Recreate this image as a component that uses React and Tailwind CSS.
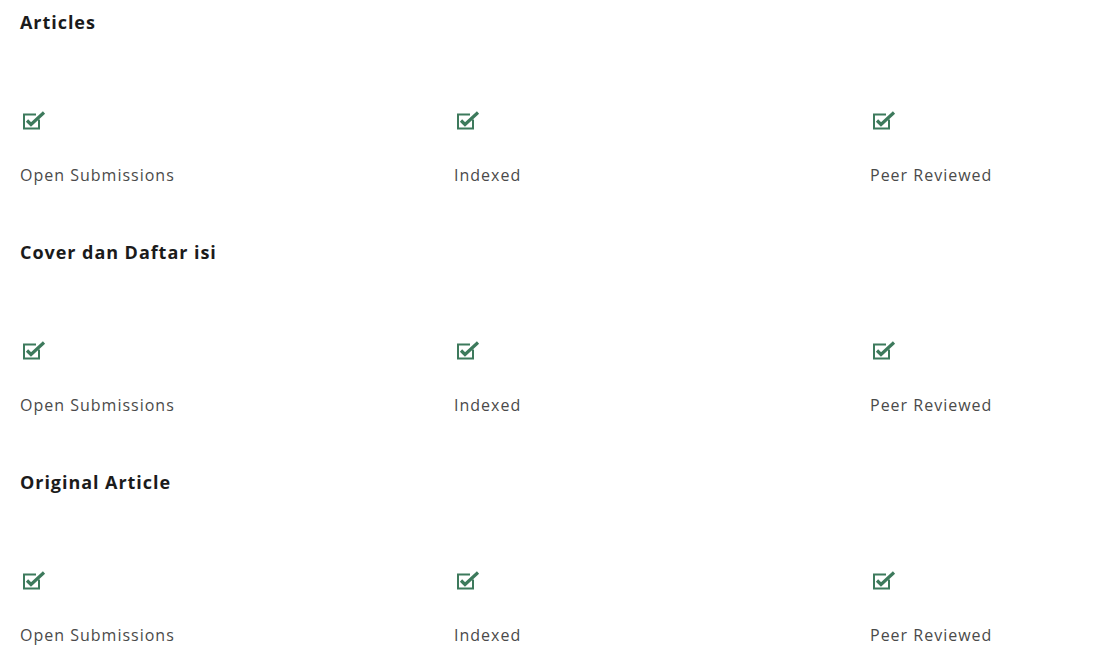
const SECTIONS = ['Articles', 'Cover dan Daftar isi', 'Original Article'];
const ITEMS = [
  { label: 'Open Submissions', w: 'w-[434px]' },
  { label: 'Indexed', w: 'w-[416px]' },
  { label: 'Peer Reviewed', w: 'w-auto' },
];

function CheckBox() {
  return (
    <svg width="24" height="20" viewBox="0 0 24 20" className="block">
      <path d="M17 8.5V17.5H2V3.5H14" fill="none" stroke="#3d7a5c" strokeWidth="2" />
      <path d="M5 9.5L9 13.5L22 1.5" fill="none" stroke="#3d7a5c" strokeWidth="3.2" strokeLinejoin="miter" />
    </svg>
  );
}

export default function App() {
  return (
    <div className="bg-white min-h-[660px] px-5 font-['Open_Sans',sans-serif]">
      {SECTIONS.map(title => (
        <section key={title} className="h-[230px]">
          <h3 className="pt-[10px] text-[18px] leading-[24px] font-bold text-[#1b1b1b] tracking-[0.95px]">{title}</h3>
          <div className="flex mt-[77px]">
            {ITEMS.map(({ label, w }) => (
              <div key={label} className={`${w} shrink-0`}>
                <div className="pl-[2px] h-[20px]">
                  <CheckBox />
                </div>
                <p className="mt-[34px] text-[16px] leading-[20px] text-[#4a4a4a] tracking-[1px]">{label}</p>
              </div>
            ))}
          </div>
        </section>
      ))}
    </div>
  );
}
